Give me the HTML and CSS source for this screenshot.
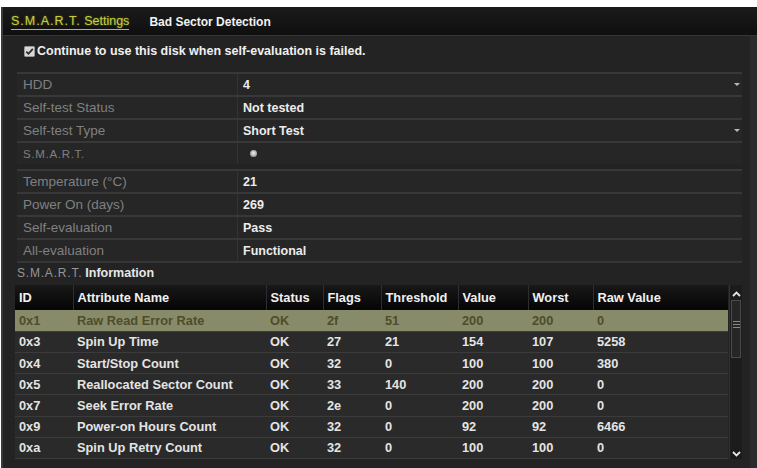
FILE: index.html
```html
<!DOCTYPE html>
<html lang="en">
<head>
    <meta charset="UTF-8">
    <title>HDD Detect</title>
    <link rel="stylesheet" href="styles.css">
</head>
<body>
<div class="window">
    <div class="tabs">
        <span class="tab active"><span class="abbr">S.M.A.R.T.</span> Settings</span>
        <span class="tab">Bad Sector Detection</span>
    </div>

    <div class="main">
        <label class="check-row">
            <svg class="checkbox" width="11" height="11" viewBox="0 0 11 11">
                <rect x="0.5" y="0.5" width="10" height="10" rx="1" fill="#d8d8d8" stroke="#9a9a9a"/>
                <path d="M2.3 5.6 L4.5 7.8 L8.8 2.9" fill="none" stroke="#2a2a2a" stroke-width="1.8"/>
            </svg>
            Continue to use this disk when self-evaluation is failed.
        </label>

        <div class="form">
            <div class="group">
                <div class="row">
                    <div class="label">HDD</div>
                    <div class="value">4<span class="drop"></span></div>
                </div>
                <div class="row">
                    <div class="label">Self-test Status</div>
                    <div class="value">Not tested</div>
                </div>
                <div class="row">
                    <div class="label">Self-test Type</div>
                    <div class="value">Short Test<span class="drop"></span></div>
                </div>
                <div class="row">
                    <div class="label"><span class="abbr">S.M.A.R.T.</span></div>
                    <div class="value"><span class="dot"></span></div>
                </div>
            </div>
            <div class="group">
                <div class="row">
                    <div class="label">Temperature (°C)</div>
                    <div class="value">21</div>
                </div>
                <div class="row">
                    <div class="label">Power On (days)</div>
                    <div class="value">269</div>
                </div>
                <div class="row">
                    <div class="label">Self-evaluation</div>
                    <div class="value">Pass</div>
                </div>
                <div class="row">
                    <div class="label">All-evaluation</div>
                    <div class="value">Functional</div>
                </div>
            </div>
        </div>

        <div class="info-title"><span class="abbr">S.M.A.R.T.</span> Information</div>

        <div class="info">
            <table class="attrs">
                <colgroup>
                    <col style="width:58px">
                    <col style="width:193px">
                    <col style="width:57px">
                    <col style="width:58px">
                    <col style="width:77px">
                    <col style="width:70px">
                    <col style="width:65px">
                    <col>
                </colgroup>
                <thead>
                <tr>
                    <th>ID</th><th>Attribute Name</th><th>Status</th><th>Flags</th>
                    <th>Threshold</th><th>Value</th><th>Worst</th><th>Raw Value</th>
                </tr>
                </thead>
                <tbody>
                <tr class="selected">
                    <td>0x1</td><td>Raw Read Error Rate</td><td>OK</td><td>2f</td>
                    <td>51</td><td>200</td><td>200</td><td>0</td>
                </tr>
                <tr>
                    <td>0x3</td><td>Spin Up Time</td><td>OK</td><td>27</td>
                    <td>21</td><td>154</td><td>107</td><td>5258</td>
                </tr>
                <tr>
                    <td>0x4</td><td>Start/Stop Count</td><td>OK</td><td>32</td>
                    <td>0</td><td>100</td><td>100</td><td>380</td>
                </tr>
                <tr>
                    <td>0x5</td><td>Reallocated Sector Count</td><td>OK</td><td>33</td>
                    <td>140</td><td>200</td><td>200</td><td>0</td>
                </tr>
                <tr>
                    <td>0x7</td><td>Seek Error Rate</td><td>OK</td><td>2e</td>
                    <td>0</td><td>200</td><td>200</td><td>0</td>
                </tr>
                <tr>
                    <td>0x9</td><td>Power-on Hours Count</td><td>OK</td><td>32</td>
                    <td>0</td><td>92</td><td>92</td><td>6466</td>
                </tr>
                <tr>
                    <td>0xa</td><td>Spin Up Retry Count</td><td>OK</td><td>32</td>
                    <td>0</td><td>100</td><td>100</td><td>0</td>
                </tr>
                </tbody>
            </table>

            <div class="scrollbar">
                <svg class="arrow" width="9" height="6" viewBox="0 0 9 6">
                    <path d="M1 5 L4.5 1.5 L8 5" fill="none" stroke="#e6e6e6" stroke-width="1.8"/>
                </svg>
                <div class="track">
                    <div class="thumb"><span class="grip"></span></div>
                </div>
                <svg class="arrow" width="9" height="6" viewBox="0 0 9 6">
                    <path d="M1 1 L4.5 4.5 L8 1" fill="none" stroke="#e6e6e6" stroke-width="1.8"/>
                </svg>
            </div>
        </div>
    </div>
</div>
</body>
</html>
```

FILE: styles.css
```css
*{
    margin: 0;
    padding: 0;
    box-sizing: border-box;
}
body{
    background-color: #fff;
    font-family: "Liberation Sans", Arial, sans-serif;
    font-size: 12.5px;
    color: #e8e8e8;
}
.window{
    margin: 7px 0 0 1px;
    height: 461px;
    background-color: #232323;
    border-left: 2px solid #3a3a3a;
    display: flex;
    flex-direction: column;
    overflow: hidden;
}
.abbr{
    letter-spacing: 0.9px;
    font-weight: normal;
}

/* tab bar */
.tabs{
    height: 29px;
    background: linear-gradient(#1b1b1b, #0f0f0f);
    border-bottom: 1px solid #363636;
    display: flex;
    align-items: center;
    gap: 20px;
    padding: 2px 0 0 8px;
}
.tab{
    font-size: 12px;
    font-weight: bold;
    color: #f2f2f2;
}
.tab.active{
    font-weight: normal;
    font-size: 12.5px;
    color: #c4cf3c;
    padding-bottom: 1px;
    border-bottom: 1px solid #b3c22e;
    text-shadow: 0 0 2px rgba(190, 210, 60, 0.5);
}
.tab.active .abbr{
    letter-spacing: 1px;
}

.main{
    flex: 1;
    display: flex;
    flex-direction: column;
    padding: 0 8px 0 12px;
    border-right: 7px solid #2c2c2c;
}

.check-row{
    height: 22px;
    margin-top: 4px;
    display: flex;
    align-items: center;
    gap: 2px;
    padding-left: 9px;
    font-weight: bold;
    color: #f0f0f0;
}

/* setting rows */
.form{
    margin-top: 10px;
    margin-left: 2px;
    border-bottom: 2px solid #363636;
}
.group + .group{
    margin-top: 5px;
}
.row{
    display: flex;
    height: 23px;
    border-top: 2px solid #383838;
    background-color: #262626;
}
.label{
    width: 221px;
    padding-left: 6px;
    display: flex;
    align-items: center;
    font-size: 13.5px;
    color: #808080;
    border-right: 1px solid #333;
}
.label .abbr{
    font-size: 11.5px;
    letter-spacing: 0.7px;
}
.value{
    flex: 1;
    display: flex;
    align-items: center;
    padding-left: 5px;
    font-weight: bold;
    color: #ececec;
    position: relative;
}
.drop{
    position: absolute;
    right: 2px;
    top: 9px;
    border-left: 3px solid transparent;
    border-right: 3px solid transparent;
    border-top: 3px solid #b8b8b8;
}
.dot{
    width: 7px;
    height: 7px;
    margin-left: 7px;
    border-radius: 50%;
    background: radial-gradient(circle at 50% 45%, #f2f2f2, #9a9a9a 70%);
}

.info-title{
    height: 20px;
    display: flex;
    align-items: center;
    padding-left: 2px;
    font-weight: bold;
}
.info-title .abbr{
    font-size: 12px;
    letter-spacing: 0.8px;
    color: #959595;
    margin-right: 3px;
}

/* attribute table + scrollbar */
.info{
    display: flex;
    margin-top: 2px;
}
.attrs{
    width: 723px;
    border-collapse: collapse;
    table-layout: fixed;
    font-weight: bold;
    font-size: 12.8px;
}
.attrs th{
    height: 25px;
    text-align: left;
    padding-left: 4px;
    color: #f0f0f0;
    background: linear-gradient(#181818, #050505);
    border-left: 1px solid #2e2e2e;
}
.attrs th:first-child{
    border-left: none;
}
.attrs td{
    height: 21px;
    padding-left: 4px;
    color: #e4e4e4;
    background-color: #2a2a2a;
    border-bottom: 1px solid #3b3b3b;
    white-space: nowrap;
}
.attrs tr.selected td{
    background-color: #888b6a;
    color: #4e4d28;
}
.scrollbar{
    width: 13px;
    height: 174px;
    margin-left: 1px;
    display: flex;
    flex-direction: column;
    align-items: center;
    background-color: #1c1c1c;
    border-left: 1px solid #333;
    padding: 6px 0 2px;
}
.track{
    flex: 1;
    width: 100%;
    padding: 3px 1px;
}
.thumb{
    height: 58px;
    border: 1px solid #4a4a4a;
    background-color: #262626;
    display: flex;
    justify-content: center;
    padding-top: 20px;
}
.grip{
    width: 7px;
    height: 7px;
    border-top: 1px solid #8a8a8a;
    border-bottom: 1px solid #8a8a8a;
    position: relative;
}
.grip::after{
    content: "";
    position: absolute;
    left: 0;
    right: 0;
    top: 2px;
    border-top: 1px solid #8a8a8a;
}
```
